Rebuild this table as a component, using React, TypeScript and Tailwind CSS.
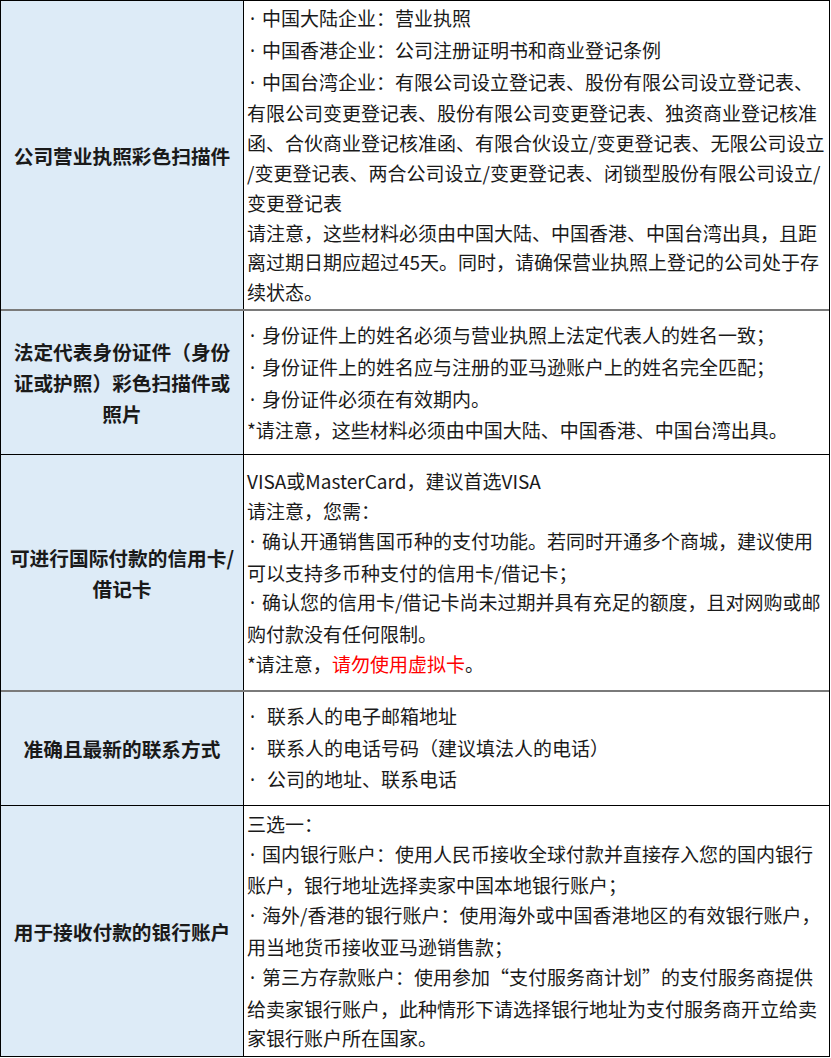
import React from "react";

const F = "font-[Noto_Sans_CJK_SC,sans-serif]";

function B({ w = "w-[15px]" }: { w?: string }) {
  return (
    <span className={`inline-block ${w} pl-[3px] font-[Noto_Sans,sans-serif]`}>·</span>
  );
}

function Row({
  h,
  left,
  lines,
  sep,
}: {
  h: string;
  left: React.ReactNode[];
  lines: React.ReactNode[];
  sep: string;
}) {
  return (
    <div className={`flex ${h} ${sep}`}>
      <div className="w-[243px] shrink-0 bg-[#ddebf7] border-r border-black flex flex-col items-center justify-center text-[19.7px] leading-[31px] font-bold text-[#1a1a1a]">
        {left.map((l, i) => (
          <div key={i} className="whitespace-nowrap">
            {l}
          </div>
        ))}
      </div>
      <div className="flex-1 bg-white pl-[3px] flex flex-col justify-center text-[19px] leading-[29.8px] text-[#1a1a1a]">
        {lines.map((l, i) => (
          <div key={i} className="whitespace-nowrap">
            {l}
          </div>
        ))}
      </div>
    </div>
  );
}

export default function App() {
  return (
    <div className={`w-[831px] bg-white ${F}`}>
      <div className="w-[830px] border border-black">
        <Row
          h="h-[310px]"
          sep="border-b-2 border-[#7a7a7a]"
          left={["公司营业执照彩色扫描件"]}
          lines={[
            <><B />中国大陆企业：营业执照</>,
            <><B />中国香港企业：公司注册证明书和商业登记条例</>,
            <><B />中国台湾企业：有限公司设立登记表、股份有限公司设立登记表、</>,
            "有限公司变更登记表、股份有限公司变更登记表、独资商业登记核准",
            "函、合伙商业登记核准函、有限合伙设立/变更登记表、无限公司设立",
            "/变更登记表、两合公司设立/变更登记表、闭锁型股份有限公司设立/",
            "变更登记表",
            "请注意，这些材料必须由中国大陆、中国香港、中国台湾出具，且距",
            "离过期日期应超过45天。同时，请确保营业执照上登记的公司处于存",
            "续状态。",
          ]}
        />
        <Row
          h="h-[144px]"
          sep="border-b border-black"
          left={["法定代表身份证件（身份", "证或护照）彩色扫描件或", "照片"]}
          lines={[
            <><B />身份证件上的姓名必须与营业执照上法定代表人的姓名一致；</>,
            <><B />身份证件上的姓名应与注册的亚马逊账户上的姓名完全匹配；</>,
            <><B />身份证件必须在有效期内。</>,
            "*请注意，这些材料必须由中国大陆、中国香港、中国台湾出具。",
          ]}
        />
        <Row
          h="h-[237px]"
          sep="border-b-2 border-[#7a7a7a]"
          left={["可进行国际付款的信用卡/", "借记卡"]}
          lines={[
            "VISA或MasterCard，建议首选VISA",
            "请注意，您需：",
            <><B />确认开通销售国币种的支付功能。若同时开通多个商城，建议使用</>,
            "可以支持多币种支付的信用卡/借记卡；",
            <><B />确认您的信用卡/借记卡尚未过期并具有充足的额度，且对网购或邮</>,
            "购付款没有任何限制。",
            <>
              *请注意，<span className="text-[#ff0000]">请勿使用虚拟卡</span>。
            </>,
          ]}
        />
        <Row
          h="h-[114px]"
          sep="border-b border-black"
          left={["准确且最新的联系方式"]}
          lines={[
            <><B w="w-[20px]" />联系人的电子邮箱地址</>,
            <><B w="w-[20px]" />联系人的电话号码（建议填法人的电话）</>,
            <><B w="w-[20px]" />公司的地址、联系电话</>,
          ]}
        />
        <Row
          h="h-[250px]"
          sep=""
          left={["用于接收付款的银行账户"]}
          lines={[
            "三选一：",
            <><B />国内银行账户：使用人民币接收全球付款并直接存入您的国内银行</>,
            "账户，银行地址选择卖家中国本地银行账户；",
            <><B />海外/香港的银行账户：使用海外或中国香港地区的有效银行账户，</>,
            "用当地货币接收亚马逊销售款；",
            <><B />第三方存款账户：使用参加“支付服务商计划”的支付服务商提供</>,
            "给卖家银行账户，此种情形下请选择银行地址为支付服务商开立给卖",
            "家银行账户所在国家。",
          ]}
        />
      </div>
    </div>
  );
}
